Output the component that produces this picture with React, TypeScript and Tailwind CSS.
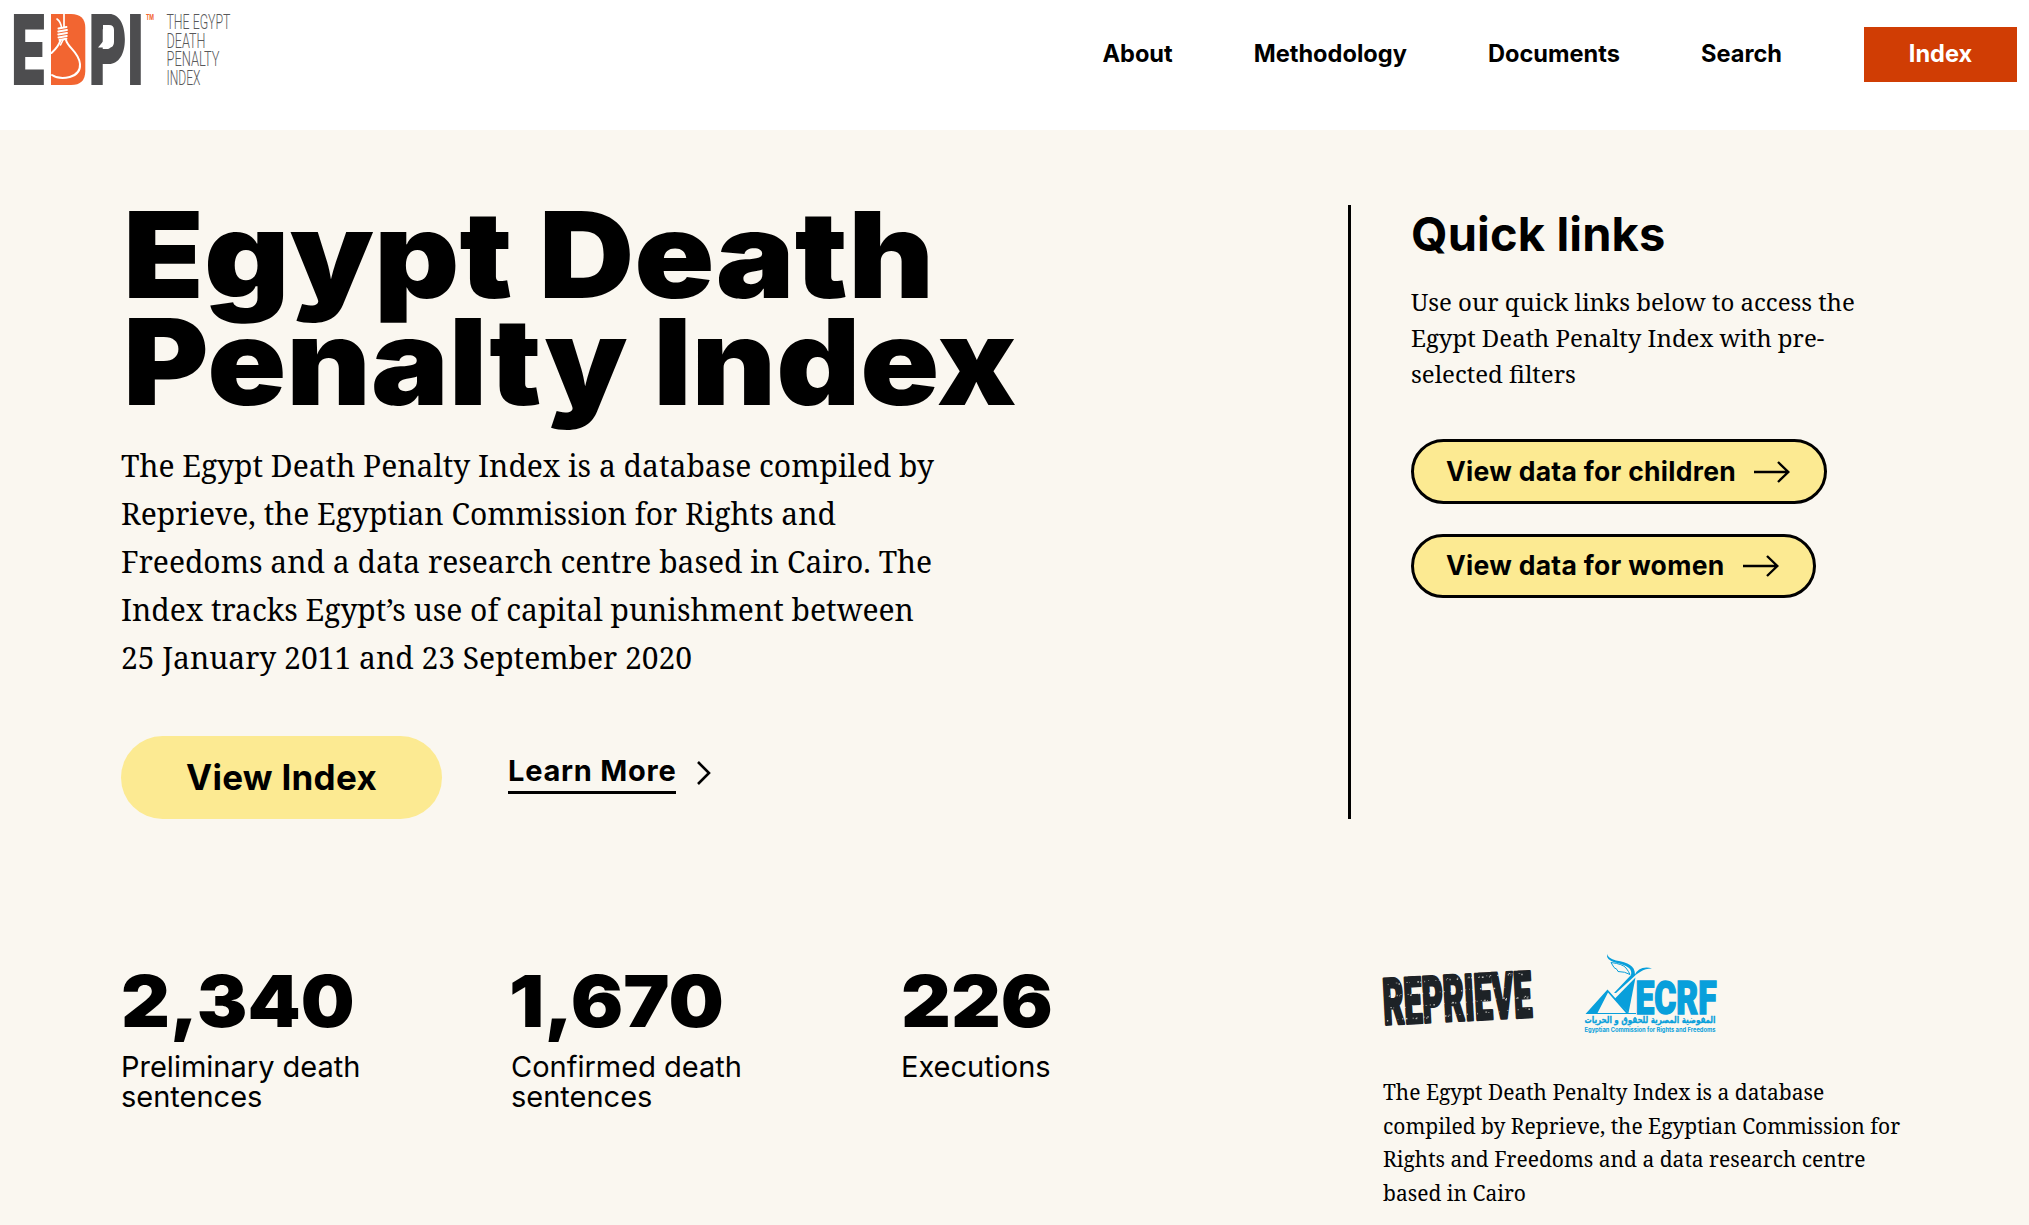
const SANS = "font-['Inter',sans-serif]";
const SERIF = "font-['Noto_Serif',serif]";

function EdpiLogo() {
  const tagline: [string, number, number][] = [
    ["THE EGYPT", 29, 64],
    ["DEATH", 47.8, 39],
    ["PENALTY", 66, 53],
    ["INDEX", 85, 34],
  ];
  return (
    <svg width="240" height="100" viewBox="0 0 240 100" aria-label="EDPI" className="block overflow-visible">
      <g fill="#4d4d4f" fontFamily="Inter, sans-serif" fontWeight="900">
        <text transform="translate(11.3 84.6) scale(.59 1)" fontSize="97">E</text>
        <text transform="translate(88.800 84.6) scale(.59 1)" fontSize="97">P</text>
        <text transform="translate(127.4 84.6) scale(.56 1)" fontSize="97">I</text>
      </g>
      <path d="M103 25h6q5 0 5 5v12q0 5.500-5 5.500H98l5-6z" fill="#fff" />
      <path d="M51 14h20q14.300 0 14.300 14v43q0 14-14.300 14H51z" fill="#f26531" />
      <g fill="none" stroke="#fff" strokeLinecap="round">
        <path d="M64 14v13" strokeWidth="1.700" strokeLinecap="butt" />
        <path d="M57 19q4 3 4.500 9" strokeWidth="1.600" />
        <path d="M58.500 28.500l8-1.500M58.300 31.500l8.700-1.500M58.300 34.500l8.700-1.500M58.500 37.500l8.300-1.500M59.500 40l7-1.300" strokeWidth="1.900" />
        <path d="M60.500 40q-1.500 6-9 13M66 40c2 8 13 12 14 24 1 14-19 17-28 11" strokeWidth="2" />
        <path d="M63 40l-2.500 5" strokeWidth="1.600" />
      </g>
      <text x="146" y="19.500" fontSize="7.500" fontWeight="700" fontFamily="Inter, sans-serif" fill="#f26531" textLength="8" lengthAdjust="spacingAndGlyphs">TM</text>
      <g fill="#58585a" fontFamily="Roboto, sans-serif" fontWeight="350" fontSize="20.500">
        {tagline.map(([word, y, w]) => (
          <text key={word} x="166.500" y={y} textLength={w} lengthAdjust="spacingAndGlyphs">{word}</text>
        ))}
      </g>
    </svg>
  );
}

// Worn-ink flecks scattered over the stamp lettering.
const flecks = Array.from({ length: 150 }, (_, i) => ({
  x: 3 + ((i * 61.803) % 146),
  y: 8 + ((i * 37.77 + (i % 7) * 5) % 48),
  w: 0.7 + (i % 4) * 0.35,
  h: 0.6 + (i % 3) * 0.45,
}));

function ReprieveLogo() {
  return (
    <svg width="156" height="66" viewBox="0 0 156 66" aria-label="Reprieve" className="block overflow-visible">
      <text
        transform="translate(1 59.500) rotate(-3)"
        fontSize="64"
        fontWeight="900"
        fontFamily="Roboto, sans-serif"
        fill="#1d2226"
        stroke="#1d2226"
        strokeWidth="3"
        strokeLinejoin="round"
        textLength="149"
        lengthAdjust="spacingAndGlyphs"
      >
        REPRIEVE
      </text>
      {flecks.map((f, i) => (
        <rect key={i} x={f.x} y={f.y} width={f.w} height={f.h} fill="#faf7f0" opacity=".75" />
      ))}
    </svg>
  );
}

function EcrfLogo() {
  return (
    <svg width="134" height="84" viewBox="0 0 134 84" aria-label="ECRF" className="block overflow-visible">
      <g fill="#089fdb">
        <path d="M1.500 61L23.500 36.500 44.500 60H52v1zM13.500 60h28.500L24 39.500z" fillRule="evenodd" />
        <path d="M30.500 46L51.500 24.500 44.500 60z" />
        <path d="M23 1q1 4 9 6.500c12 2 19 5 19 14 2-5 9-9 17-6-9 0-15 5-20 10L32 40h-2l17-18q1-4-2-7-5-4-14-5.500Q22 7 23 1z" />
        <text x="51.500" y="60.500" fontSize="47" fontWeight="900" fontFamily="Roboto, sans-serif" stroke="#089fdb" strokeWidth="1.600" textLength="81" lengthAdjust="spacingAndGlyphs">ECRF</text>
        <text x="0.500" y="70" direction="ltr" fontSize="9.500" fontWeight="700" fontFamily="'DejaVu Sans', sans-serif" stroke="#089fdb" strokeWidth=".3" textLength="131" lengthAdjust="spacingAndGlyphs">المفوضية المصرية للحقوق و الحريات</text>
        <text x="0.500" y="78.800" fontSize="6" fontWeight="700" fontFamily="Inter, sans-serif" textLength="131" lengthAdjust="spacingAndGlyphs">Egyptian Commission for Rights and Freedoms</text>
      </g>
      <path d="M27 9.500q12 1.500 15 5.500t4 6.500q-5-3-12-3 0-2-4-4z" fill="#faf7f0" stroke="#089fdb" strokeWidth="1" />
    </svg>
  );
}

function PillLink({ label, height }: { label: string; height: string }) {
  return (
    <a className={`flex items-center ${height} pl-[32px] pr-[34px] rounded-full border-3 border-black bg-[#fcea92] text-[26.500px] font-bold tracking-[0.011em] whitespace-nowrap`}>
      {label}
      <svg width="36" height="22" viewBox="0 0 36 22" fill="none" stroke="#000" strokeWidth="2.400" className="ml-[18px]">
        <path d="M0 11h34M24 1l10.300 10L24 21" />
      </svg>
    </a>
  );
}

const stats = [
  { value: "2,340", label: "Preliminary death sentences", scale: "scale-x-[1.053]" },
  { value: "1,670", label: "Confirmed death sentences", scale: "-ml-[2px] scale-x-[1.082]" },
  { value: "226", label: "Executions", scale: "scale-x-[1.072]" },
];

export default function App() {
  return (
    <div className={`w-full h-[1225px] overflow-hidden bg-[#faf7f0] text-black ${SANS}`}>
      <header className="flex justify-between h-[130px] bg-white pr-3">
        <EdpiLogo />
        <nav className="flex items-center h-[55px] mt-[27px] gap-[81px] text-[23.600px] font-bold">
          <a className="-mt-[2px]">About</a>
          <a className="-mt-[2px]">Methodology</a>
          <a className="-mt-[2px]">Documents</a>
          <a className="-mt-[2px] mr-px">Search</a>
          <a className="flex items-center justify-center w-[153px] h-[55px] pb-[2px] bg-[#d03d04] text-white">Index</a>
        </nav>
      </header>

      <main className="pl-[121px] pt-[75px]">
        <section className="flex h-[614px]">
          <div className="w-[1227px]">
            <h1 className="-mt-1 ml-[2px] text-[120px] leading-[107px] font-black whitespace-nowrap">
              <span className="block w-max origin-left scale-x-[1.103]">Egypt Death</span>
              <span className="block w-max origin-left scale-x-[1.087]">Penalty Index</span>
            </h1>
            <p className={`w-[820px] mt-[27px] text-[30px] leading-[48px] ${SERIF}`}>
              The Egypt Death Penalty Index is a database compiled by Reprieve, the Egyptian Commission for Rights and
              Freedoms and a data research centre based in Cairo. The Index tracks Egypt’s use of capital punishment
              between 25 January 2011 and 23 September 2020
            </p>
            <div className="flex mt-[54px]">
              <a className="flex items-center justify-center w-[321px] h-[83px] rounded-full bg-[#fcea92] text-[35px] font-bold tracking-[0.008em] pb-px">
                View Index
              </a>
              <a className="flex ml-[66px] mt-[17px] h-[41px]">
                <span className="w-[168px] h-[41px] border-b-3 border-black text-[29px] leading-[35px] font-bold tracking-[0.026em] whitespace-nowrap">
                  Learn More
                </span>
                <svg width="16" height="26" viewBox="0 0 16 26" fill="none" stroke="#000" strokeWidth="2.600" className="ml-5 mt-[7px]">
                  <path d="M2 2l11 11L2 24" />
                </svg>
              </a>
            </div>
          </div>
          <aside className="flex flex-col items-start border-l-3 border-black pl-[60px]">
            <h2 className="mt-[1px] text-[47px] leading-[56px] font-bold tracking-[0.003em]">Quick links</h2>
            <p className={`w-[460px] mt-[22px] mb-[47px] text-[24px] leading-[36px] ${SERIF}`}>
              Use our quick links below to access the Egypt Death Penalty Index with pre-selected filters
            </p>
            <div className="flex flex-col items-start gap-[30px]">
              <PillLink label="View data for children" height="h-[65px]" />
              <PillLink label="View data for women" height="h-[64px]" />
            </div>
          </aside>
        </section>

        <section className="flex mt-[134px]">
          <div className="grid grid-cols-[390px_390px_482px] pt-[12px]">
            {stats.map((s) => (
              <div key={s.value} className="w-[260px]">
                <div className={`w-max origin-left text-[72px] leading-[72px] font-black ${s.scale}`}>{s.value}</div>
                <div className="mt-[15px] text-[29px] leading-[30px]">{s.label}</div>
              </div>
            ))}
          </div>
          <div>
            <div className="flex h-[84px]">
              <div className="pt-[12px]">
                <ReprieveLogo />
              </div>
              <div className="ml-[45px]">
                <EcrfLogo />
              </div>
            </div>
            <p className={`w-[530px] mt-[39px] text-[21px] leading-[33.600px] ${SERIF}`}>
              The Egypt Death Penalty Index is a database compiled by Reprieve, the Egyptian Commission for Rights and
              Freedoms and a data research centre based in Cairo
            </p>
          </div>
        </section>
      </main>
    </div>
  );
}
